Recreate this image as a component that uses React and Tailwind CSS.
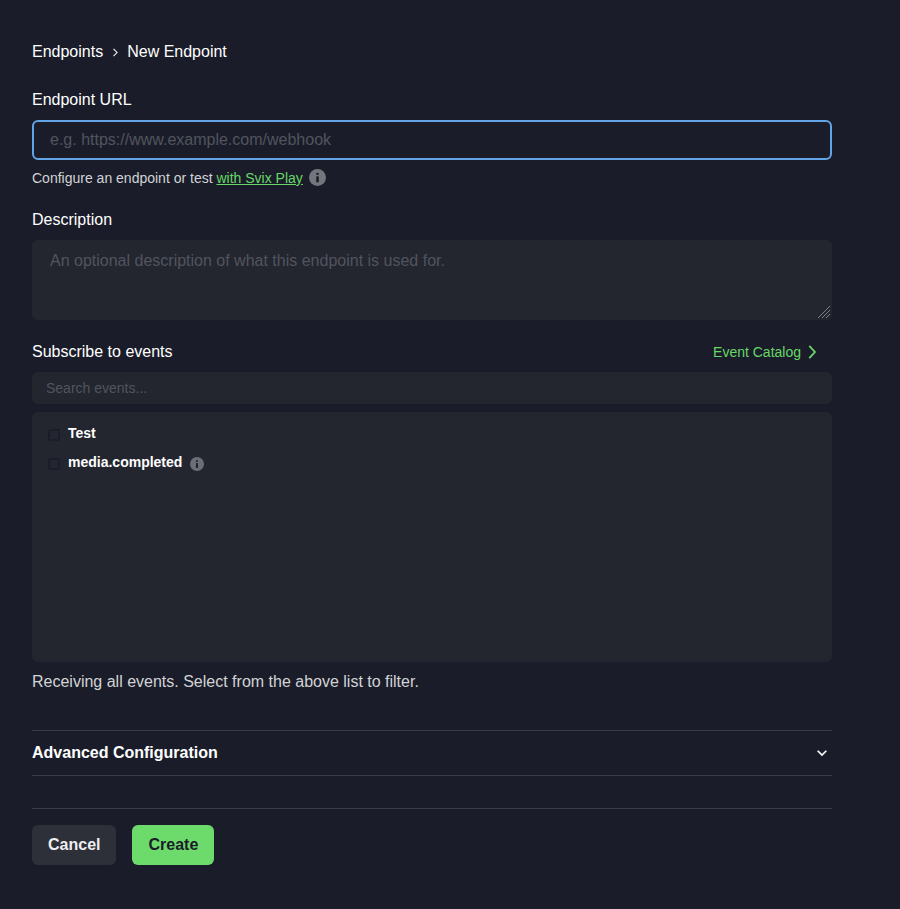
import React from "react";

function Info({ size, color, dot }) {
  return (
    <svg width={size} height={size} viewBox="0 0 24 24" className="shrink-0">
      <circle cx="12" cy="12" r="12" fill={color} />
      <rect x="10.2" y="10.4" width="3.6" height="8.4" fill={dot} />
      <rect x="10.2" y="5.2" width="3.6" height="3.4" rx="1.6" fill={dot} />
    </svg>
  );
}

function Chevron({ className, d = "M9 6l6 6-6 6", w = 2 }) {
  return (
    <svg viewBox="0 0 24 24" fill="none" stroke="currentColor" strokeWidth={w} strokeLinecap="square" className={className}>
      <path d={d} />
    </svg>
  );
}

function EventRow({ label, info }) {
  return (
    <div className="flex items-center h-[29px]">
      <span className="w-3 h-3 border-2 border-[#1b1e2a] rounded-[2px] mt-[3px]" />
      <span className="ml-[8px] -mt-[1px] text-sm leading-5 font-bold text-white">{label}</span>
      {info && (
        <span className="ml-2 mt-[3px]">
          <Info size={14} color="#6b6e76" dot="#23262f" />
        </span>
      )}
    </div>
  );
}

export default function App() {
  return (
    <div className="min-h-[909px] bg-[#1a1d29] px-8 pt-10 text-white font-['Liberation_Sans',Arial,sans-serif]">
      <div className="w-[800px]">
        <nav className="flex items-center h-6 text-base leading-6 text-white">
          <span>Endpoints</span>
          <Chevron className="w-[13px] h-[13px] mx-[5.5px] text-[#e6e6e8]" w={2} />
          <span>New Endpoint</span>
        </nav>

        <label className="block mt-6 text-base leading-6">Endpoint URL</label>
        <input
          placeholder="e.g. https://www.example.com/webhook"
          className="block w-full h-10 mt-2 px-4 rounded-md bg-[#1a1d29] border-2 border-[#63a4e6] text-base outline-none placeholder:text-[#51545e]"
        />
        <div className="flex items-center h-5 mt-2 text-sm leading-5 text-[#d2d3d6]">
          <span>Configure an endpoint or test&nbsp;</span>
          <span className="text-[#68d768] underline">with Svix Play</span>
          <span className="ml-[6px] -mt-[1px]">
            <Info size={17} color="#74767e" dot="#1a1d29" />
          </span>
        </div>

        <label className="block mt-5 text-base leading-6">Description</label>
        <div className="relative mt-2">
          <textarea
            placeholder="An optional description of what this endpoint is used for."
            className="block w-full h-20 px-[18px] py-[9px] rounded-md bg-[#23262f] text-base leading-6 resize-none outline-none placeholder:text-[#51545e]"
          />
          <svg width="14" height="14" viewBox="0 0 14 14" className="absolute right-[1px] bottom-[1px] pointer-events-none" stroke="#7c7e84" strokeWidth="1">
            <path d="M1 13L13 1M5 13L13 5M9 13L13 9" />
          </svg>
        </div>

        <div className="flex items-center justify-between h-6 mt-5">
          <span className="text-base leading-6">Subscribe to events</span>
          <span className="flex items-center mr-[12px] text-sm leading-5 text-[#68d768]">
            <span className="mr-[1px]">Event Catalog</span>
            <Chevron className="w-5 h-5 -mr-[2px]" d="M9.5 5.5l6 6.5-6 6.5" w={2.2} />
          </span>
        </div>
        <input
          placeholder="Search events..."
          className="block w-full h-8 mt-2 px-[14px] rounded-md bg-[#23262f] text-sm outline-none placeholder:text-[#51545e]"
        />
        <div className="h-[250px] mt-2 pt-[7px] px-4 rounded-md bg-[#23262f]">
          <EventRow label="Test" />
          <EventRow label="media.completed" info />
        </div>
        <p className="mt-2 text-base leading-6 text-[#d2d3d6]">Receiving all events. Select from the above list to filter.</p>

        <div className="flex items-center justify-between h-[46px] mt-[36px] border-y border-[#3a3c47]">
          <span className="text-base leading-6 font-bold">Advanced Configuration</span>
          <Chevron className="w-5 h-5 text-white" d="M7.5 10l4.5 4.5 4.5-4.5" w={2} />
        </div>

        <div className="flex gap-4 mt-8 pt-4 border-t border-[#3a3c47]">
          <button className="h-10 px-4 rounded-md bg-[#2d2f39] text-base font-bold text-[#eeeef0]">Cancel</button>
          <button className="h-10 px-4 rounded-md bg-[#6cdb6c] text-base font-bold text-[#1a1d29]">Create</button>
        </div>
      </div>
    </div>
  );
}
